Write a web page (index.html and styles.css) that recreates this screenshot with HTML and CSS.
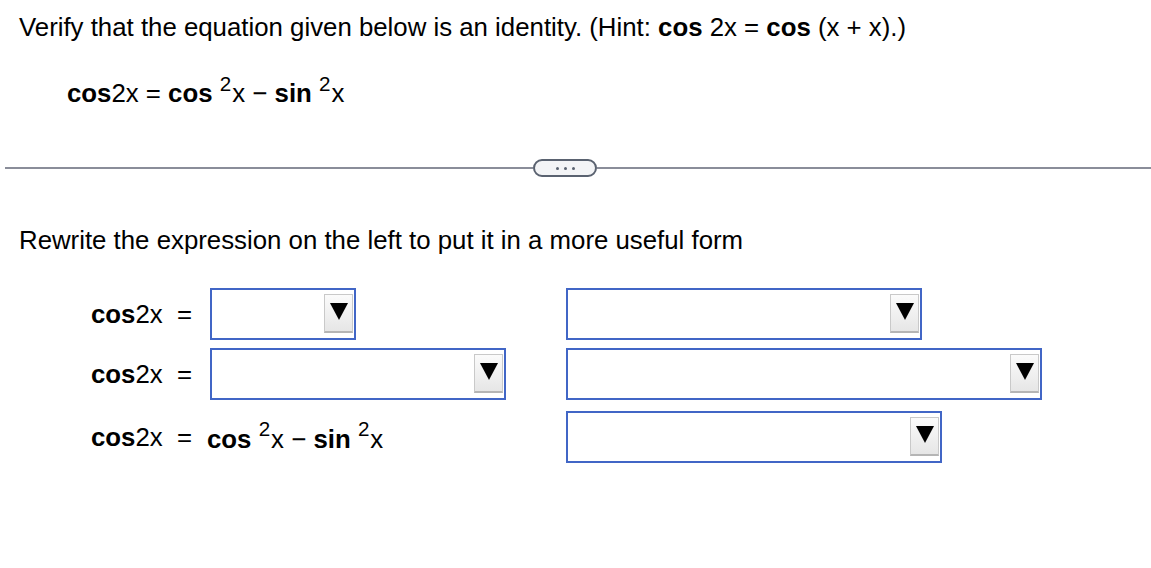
FILE: index.html
```html
<!DOCTYPE html>
<html>
<head>
<meta charset="utf-8">
<link rel="stylesheet" href="styles.css">
</head>
<body>
<div class="top">
  <p class="title">Verify that the equation given below is an identity. (Hint: <b>cos</b> 2x = <b>cos</b> (x + x).)</p>
  <p class="eq"><b>cos</b>2x = <b>cos</b> <sup>2</sup>x − <b>sin</b> <sup>2</sup>x</p>
</div>
<div class="divider"><span class="line"></span><span class="pill"><i></i><i></i><i></i></span><span class="line"></span></div>
<p class="rewrite">Rewrite the expression on the left to put it in a more useful form</p>
<div class="grid">
  <div class="row r1">
    <div class="lbl"><b>cos</b>2x <span class="equals">=</span></div>
    <div class="cell"><div class="sel w146"><span class="btn"><span class="tri"></span></span></div></div>
    <div class="cell"><div class="sel w356"><span class="btn"><span class="tri"></span></span></div></div>
  </div>
  <div class="row r2">
    <div class="lbl"><b>cos</b>2x <span class="equals">=</span></div>
    <div class="cell"><div class="sel w296"><span class="btn"><span class="tri"></span></span></div></div>
    <div class="cell"><div class="sel w476"><span class="btn"><span class="tri"></span></span></div></div>
  </div>
  <div class="row r3">
    <div class="lbl"><b>cos</b>2x <span class="equals">=</span></div>
    <div class="cell expr"><b>cos</b> <sup>2</sup>x − <b>sin</b> <sup>2</sup>x</div>
    <div class="cell"><div class="sel w376"><span class="btn"><span class="tri"></span></span></div></div>
  </div>
</div>
</body>
</html>
```
FILE: styles.css
```css
html, body { margin: 0; padding: 0; background: #fff; }
body { font-family: "Liberation Sans", Arial, sans-serif; color: #000; width: 1151px; height: 568px; overflow: hidden; }
b { font-weight: bold; }
sup { font-size: 0.8em; vertical-align: 0; position: relative; top: -0.55em; margin-right: 1px; }
.top { padding: 12px 0 0 19px; }
.title { margin: 0; font-size: 25.8px; line-height: 30px; }
.eq { margin: 36px 0 0 48px; font-size: 25.8px; line-height: 30px; }
.divider { display: flex; align-items: center; margin-top: 49px; padding-left: 5px; }
.line { height: 2px; background: #8a8d99; flex: 1; }
.line:first-child { flex: 0 0 528px; }
.pill { width: 60px; height: 14px; border: 2px solid #5a6270; border-radius: 9px; background: #f3f4f6; display: flex; justify-content: center; align-items: center; gap: 5px; }
.pill i { width: 3px; height: 3px; background: #5a6270; border-radius: 50%; display: block; }
.rewrite { margin: 48px 0 0 19px; font-size: 25.8px; line-height: 30px; }
.grid { margin-top: 33px; padding-left: 91px; display: flex; flex-direction: column; }
.row { display: flex; align-items: center; height: 52px; }
.r2 { margin-top: 8px; }
.r3 { margin-top: 11px; }
.lbl { width: 119px; font-size: 25.8px; white-space: nowrap; }
.equals { margin-left: 7px; }
.cell { width: 356px; }
.expr { font-size: 25.8px; padding-top: 4px; text-indent: -3px; white-space: nowrap; }
.sel { border: 2px solid #4166c6; background: #fff; display: flex; justify-content: flex-end; align-items: flex-start; padding-right: 1px; padding-top: 4px; box-sizing: content-box; height: 44px; }
.w146 { width: 141px; }
.w356 { width: 351px; }
.w296 { width: 291px; }
.w476 { width: 471px; }
.w376 { width: 371px; }
.btn { width: 27px; height: 36px; border: 1px solid #c9c9c9; border-bottom: 2px solid #b5b5b5; background: linear-gradient(#fbfbfb, #e6e6e6); display: flex; justify-content: center; align-items: center; box-sizing: content-box; }
.tri { width: 0; height: 0; border-left: 9px solid transparent; border-right: 9px solid transparent; border-top: 17px solid #000; margin-top: -4px; }
```
